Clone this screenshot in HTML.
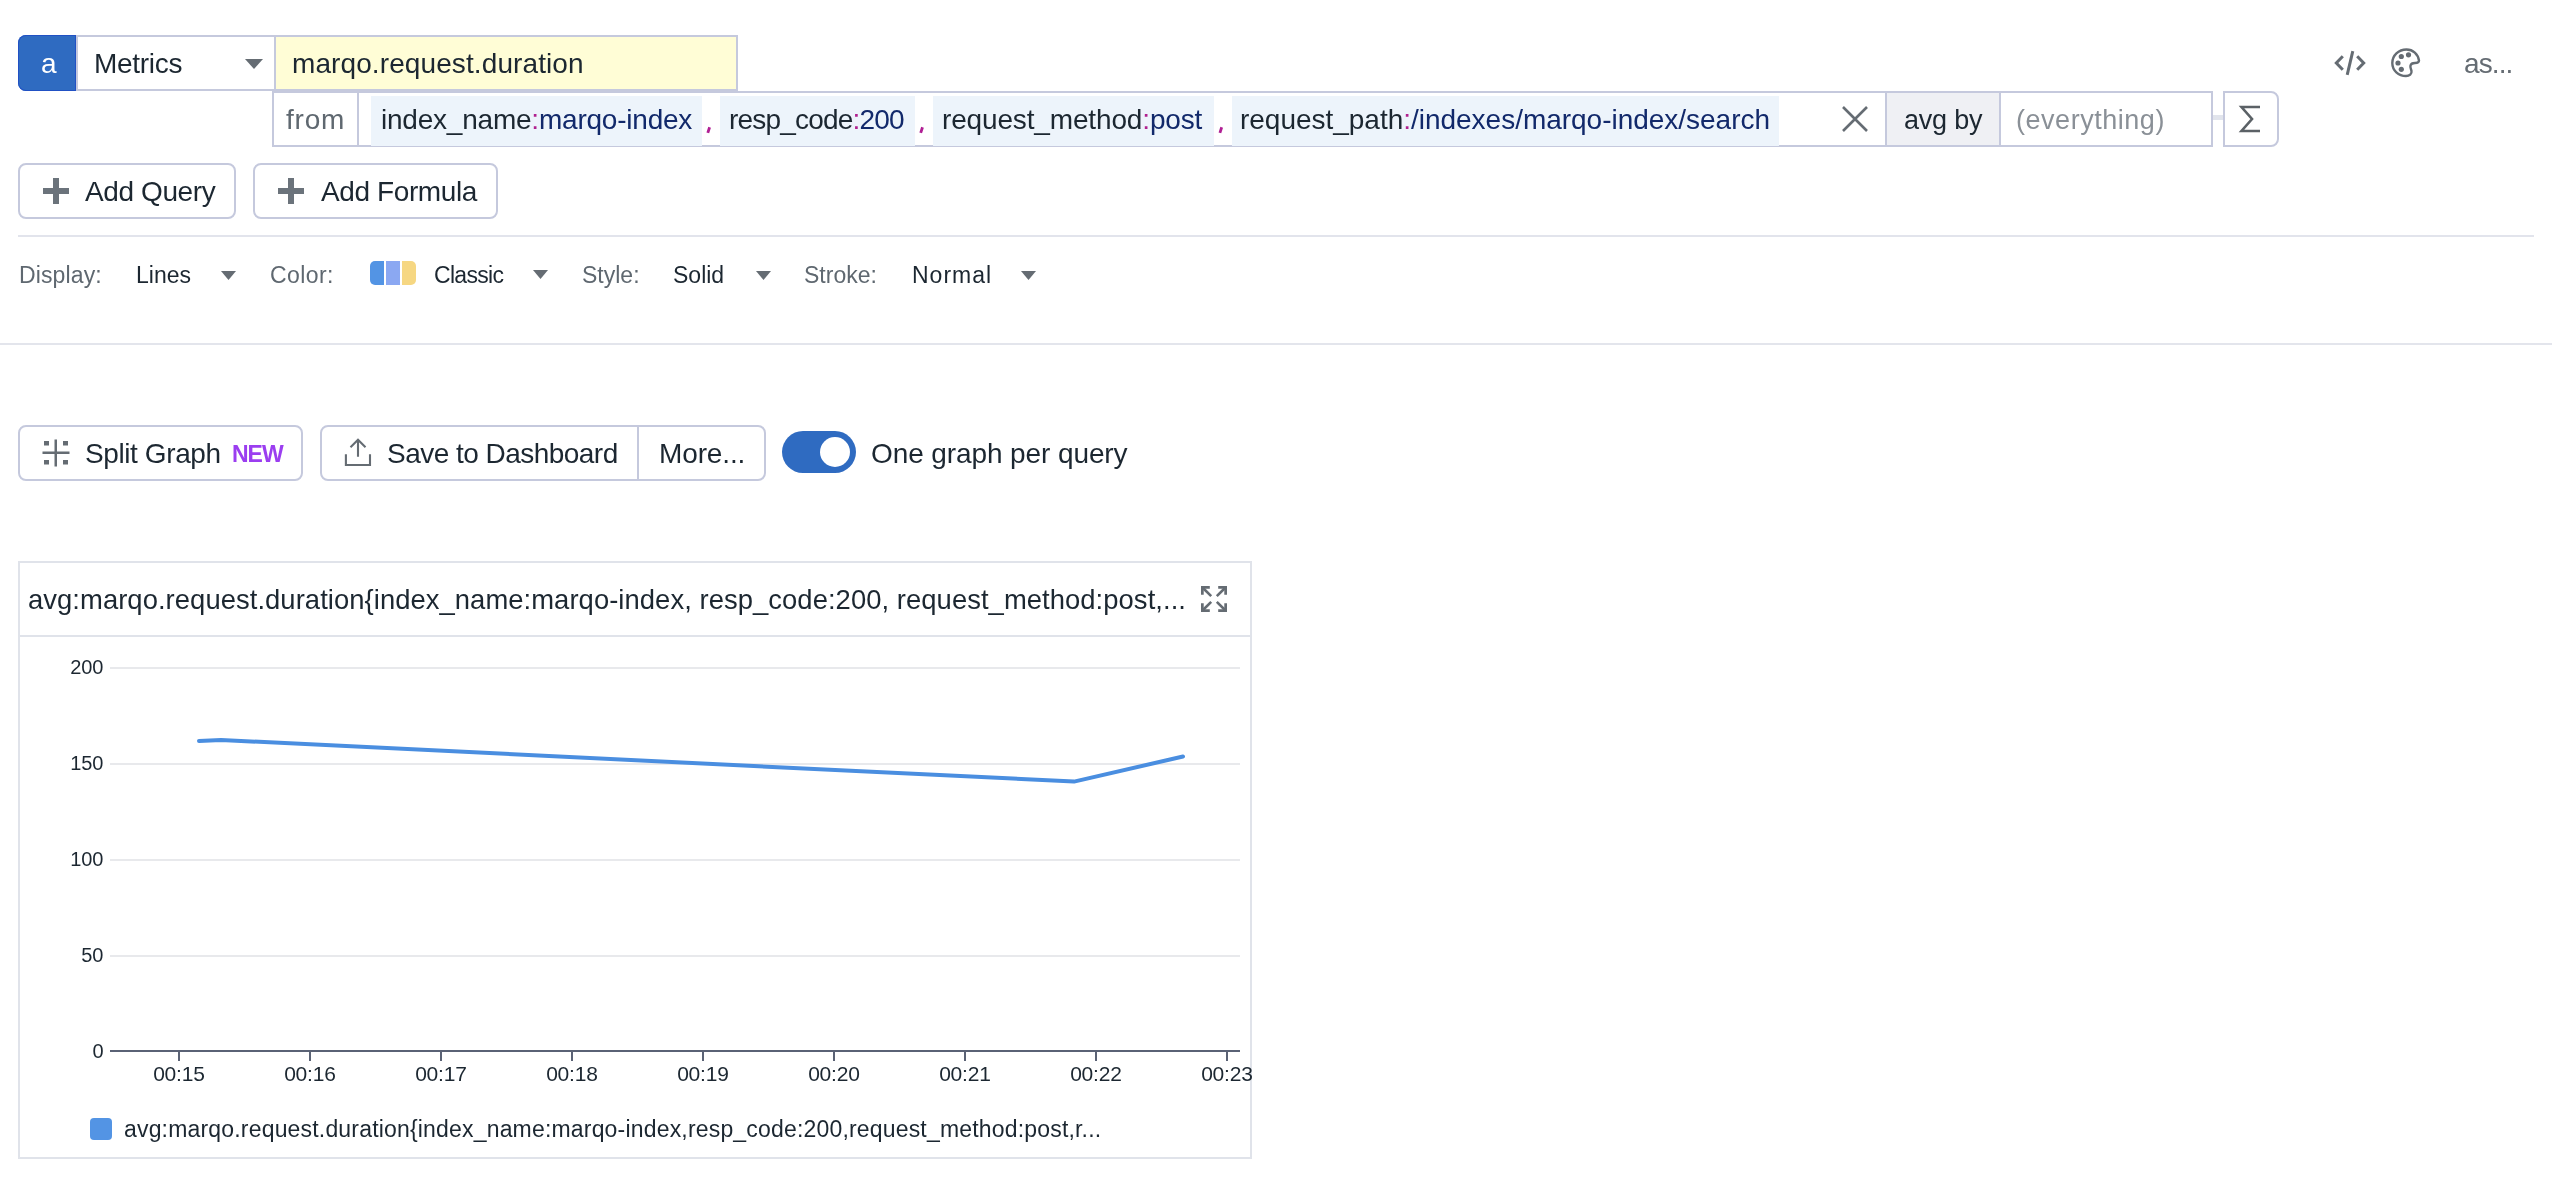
<!DOCTYPE html>
<html><head><meta charset='utf-8'><style>
html,body{margin:0;padding:0;background:#fff;width:2552px;height:1198px;overflow:hidden;}
body{position:relative;font-family:"Liberation Sans",sans-serif;}
.t{position:absolute;white-space:nowrap;will-change:transform;}
.r{position:absolute;}
svg.r{overflow:visible}
</style></head><body>
<div class='r' style='left:18px;top:35px;width:58px;height:56px;background:#2f6bc1;border-radius:8px 0 0 8px;box-shadow:inset 0 0 0 1px #2151c4'></div>
<div class='t' style='left:40.5px;top:50.3px;font-size:28px;line-height:28px;color:#ffffff'>a</div>
<div class='r' style='left:76px;top:35px;width:198px;height:56px;border:2px solid #c5c9dd;border-right:none;box-sizing:border-box;background:#fff'></div>
<div class='t' style='left:93.7px;top:50.3px;font-size:28px;line-height:28px;color:#1c2731;letter-spacing:-0.3px'>Metrics</div>
<svg class='r' style='left:245px;top:59px' width='18' height='10'><path d='M0 0H18L9 10Z' fill='#656c73'/></svg>
<div class='r' style='left:274px;top:35px;width:464px;height:56px;border:2px solid #c5c9dd;box-sizing:border-box;background:#fffdd6'></div>
<div class='t' style='left:291.8px;top:50.2px;font-size:28px;line-height:28px;color:#1c2731;letter-spacing:0.1px'>marqo.request.duration</div>
<div class='r' style='left:272px;top:91px;width:1941px;height:56px;border:2px solid #c5c9dd;box-sizing:border-box;background:#fff'></div>
<div class='r' style='left:357px;top:93px;width:2px;height:52px;background:#c5c9dd'></div>
<div class='t' style='left:286px;top:106.30000000000001px;font-size:28px;line-height:28px;color:#5f6870;letter-spacing:0.8px'>from</div>
<div class='r' style='left:371px;top:96px;width:331px;height:50px;background:#edf4fb'></div>
<div class='t' style='left:380.8px;top:106.30000000000001px;font-size:28px;line-height:28px;color:#1c2731;letter-spacing:-0.22px'>index_name<span style='color:#b0208f'>:</span><span style='color:#12296b'>marqo-index</span></div>
<svg class='r' style='left:0;top:0' width='1300' height='140'><path d='M709.6 127.3L707.8 132.9M922.5 127.3L920.7 132.9M1221.7 127.3L1219.9 132.9' stroke='#b01f94' stroke-width='2.8' fill='none'/></svg>
<div class='r' style='left:720px;top:96px;width:195px;height:50px;background:#edf4fb'></div>
<div class='t' style='left:728.9px;top:106.30000000000001px;font-size:28px;line-height:28px;color:#1c2731;letter-spacing:-0.8px'>resp_code<span style='color:#b0208f'>:</span><span style='color:#12296b'>200</span></div>
<div class='r' style='left:933px;top:96px;width:281px;height:50px;background:#edf4fb'></div>
<div class='t' style='left:942.3px;top:106.30000000000001px;font-size:28px;line-height:28px;color:#1c2731;letter-spacing:-0.15px'>request_method<span style='color:#b0208f'>:</span><span style='color:#12296b'>post</span></div>
<div class='r' style='left:1232px;top:96px;width:547px;height:50px;background:#edf4fb'></div>
<div class='t' style='left:1240px;top:106.30000000000001px;font-size:28px;line-height:28px;color:#1c2731;letter-spacing:-0.02px'>request_path<span style='color:#b0208f'>:</span><span style='color:#12296b'>/indexes/marqo-index/search</span></div>
<svg class='r' style='left:1840px;top:104px' width='30' height='30'><path d='M3 3L27 27M27 3L3 27' stroke='#656c73' stroke-width='2.6' fill='none'/></svg>
<div class='r' style='left:1885px;top:93px;width:2px;height:52px;background:#c5c9dd'></div>
<div class='r' style='left:1887px;top:93px;width:112px;height:52px;background:#eff0f4'></div>
<div class='r' style='left:1999px;top:93px;width:2px;height:52px;background:#c5c9dd'></div>
<div class='t' style='left:1903.6px;top:106.9px;font-size:27px;line-height:27px;color:#1c2731;letter-spacing:-0.2px'>avg by</div>
<div class='t' style='left:2015.6px;top:107px;font-size:27px;line-height:27px;color:#8a9097;letter-spacing:0.53px'>(everything)</div>
<div class='r' style='left:2213px;top:115px;width:10px;height:5px;background:#e1e4ec'></div>
<div class='r' style='left:2223px;top:91px;width:56px;height:56px;border:2px solid #c5c9dd;border-radius:0 8px 8px 0;box-sizing:border-box;background:#fff'></div>
<svg class='r' style='left:2236px;top:102px' width='30' height='34'><path d='M24 5H5.5L16 17L5.5 29H24' stroke='#5b6166' stroke-width='2.6' fill='none' stroke-linejoin='miter'/></svg>
<svg class='r' style='left:2330px;top:46px' width='40' height='34'><path d='M12.8 10.2L6.3 17L12.8 23.8M27.2 10.2L33.7 17L27.2 23.8' stroke='#656c73' stroke-width='3' fill='none'/><path d='M22.8 5.2L17.2 28.8' stroke='#656c73' stroke-width='3' fill='none'/></svg>
<svg class='r' style='left:2385px;top:42px' width='42' height='42'><path d='M21.5 7.5C13.5 7.5 7.3 13.5 7.3 21C7.3 28.5 13.5 34 21 34C24.5 34 27 32 26.5 29C26 26.5 25 25.5 25.5 23.5C26 21.5 28 21 30 21C32.5 21 34 20 34 18.5C33 12 28 7.5 21.5 7.5Z' stroke='#656c73' stroke-width='2.4' fill='none'/><circle cx='16.3' cy='14.5' r='2.6' fill='#656c73'/><circle cx='23.5' cy='12.8' r='2.6' fill='#656c73'/><circle cx='13' cy='21' r='2.6' fill='#656c73'/><circle cx='16.3' cy='27.3' r='2.6' fill='#656c73'/></svg>
<div class='t' style='left:2463.7px;top:49.7px;font-size:28px;line-height:28px;color:#656c73;letter-spacing:-0.9px'>as...</div>
<div class='r' style='left:18px;top:163px;width:218px;height:56px;border:2px solid #c5c9dd;border-radius:8px;box-sizing:border-box;background:#fff'></div>
<div class='r' style='left:43px;top:188.25px;width:26px;height:5.5px;background:#6b737b'></div>
<div class='r' style='left:53.25px;top:178px;width:5.5px;height:26px;background:#6b737b'></div>
<div class='t' style='left:85.2px;top:177.9px;font-size:28px;line-height:28px;color:#1c2731;letter-spacing:-0.4px'>Add Query</div>
<div class='r' style='left:253px;top:163px;width:245px;height:56px;border:2px solid #c5c9dd;border-radius:8px;box-sizing:border-box;background:#fff'></div>
<div class='r' style='left:278px;top:188.25px;width:26px;height:5.5px;background:#6b737b'></div>
<div class='r' style='left:288.25px;top:178px;width:5.5px;height:26px;background:#6b737b'></div>
<div class='t' style='left:320.5px;top:177.9px;font-size:28px;line-height:28px;color:#1c2731;letter-spacing:-0.4px'>Add Formula</div>
<div class='r' style='left:18px;top:235px;width:2516px;height:2px;background:#e2e4ec'></div>
<div class='t' style='left:19.2px;top:263.9px;font-size:23px;line-height:23px;color:#5f6870;letter-spacing:0.13px'>Display:</div>
<div class='t' style='left:136.2px;top:263.9px;font-size:23px;line-height:23px;color:#1c2731'>Lines</div>
<svg class='r' style='left:221px;top:270.5px' width='15' height='9'><path d='M0 0H15L7.5 9Z' fill='#656c73'/></svg>
<div class='t' style='left:270.2px;top:263.9px;font-size:23px;line-height:23px;color:#5f6870;letter-spacing:0.4px'>Color:</div>
<div class='r' style='left:370px;top:261px;width:46px;height:24px;border-radius:5px;overflow:hidden'><div class='r' style='left:0;top:0;width:14px;height:24px;background:#5394e4'></div><div class='r' style='left:16px;top:0;width:14px;height:24px;background:#8ba8f2'></div><div class='r' style='left:32px;top:0;width:14px;height:24px;background:#f6d782'></div></div>
<div class='t' style='left:433.6px;top:263.9px;font-size:23px;line-height:23px;color:#1c2731;letter-spacing:-0.68px'>Classic</div>
<svg class='r' style='left:533px;top:269.5px' width='15' height='9'><path d='M0 0H15L7.5 9Z' fill='#656c73'/></svg>
<div class='t' style='left:582px;top:263.9px;font-size:23px;line-height:23px;color:#5f6870'>Style:</div>
<div class='t' style='left:673.1px;top:263.9px;font-size:23px;line-height:23px;color:#1c2731'>Solid</div>
<svg class='r' style='left:756px;top:270.5px' width='15' height='9'><path d='M0 0H15L7.5 9Z' fill='#656c73'/></svg>
<div class='t' style='left:803.6px;top:263.9px;font-size:23px;line-height:23px;color:#5f6870'>Stroke:</div>
<div class='t' style='left:911.6px;top:263.9px;font-size:23px;line-height:23px;color:#1c2731;letter-spacing:1.0px'>Normal</div>
<svg class='r' style='left:1020.5px;top:270.5px' width='15' height='9'><path d='M0 0H15L7.5 9Z' fill='#656c73'/></svg>
<div class='r' style='left:0px;top:343px;width:2552px;height:2px;background:#e3e5ec'></div>
<div class='r' style='left:18px;top:425px;width:285px;height:56px;border:2px solid #c5c9dd;border-radius:8px;box-sizing:border-box;background:#fff'></div>
<svg class='r' style='left:42px;top:439px' width='28' height='28'><rect x='2' y='2' width='5' height='4.5' fill='#656c73'/><rect x='21' y='2' width='5' height='4.5' fill='#656c73'/><rect x='2' y='21' width='5' height='4.5' fill='#656c73'/><rect x='21' y='21' width='5' height='4.5' fill='#656c73'/><rect x='12.5' y='0.5' width='2.5' height='27' fill='#656c73'/><rect x='0.5' y='12.5' width='27' height='2.5' fill='#656c73'/></svg>
<div class='t' style='left:84.9px;top:440px;font-size:28px;line-height:28px;color:#1c2731;letter-spacing:-0.4px'>Split Graph</div>
<div class='t' style='left:231.7px;top:443px;font-size:23px;line-height:23px;color:#9b3ef0;font-weight:bold;letter-spacing:-1.0px'>NEW</div>
<div class='r' style='left:320px;top:425px;width:446px;height:56px;border:2px solid #c5c9dd;border-radius:8px;box-sizing:border-box;background:#fff'></div>
<div class='r' style='left:637px;top:427px;width:2px;height:52px;background:#c5c9dd'></div>
<svg class='r' style='left:338px;top:432px' width='40' height='40'><path d='M7.9 22.2V33H32V22.2' stroke='#656c73' stroke-width='2.1' fill='none'/><path d='M20 8V24.7M12.5 15.3L20 7.8L27.5 15.3' stroke='#656c73' stroke-width='2.1' fill='none'/></svg>
<div class='t' style='left:386.9px;top:439.8px;font-size:28px;line-height:28px;color:#1c2731;letter-spacing:-0.53px'>Save to Dashboard</div>
<div class='t' style='left:658.7px;top:439.8px;font-size:28px;line-height:28px;color:#1c2731;letter-spacing:-0.13px'>More...</div>
<div class='r' style='left:782px;top:431px;width:74px;height:42px;background:#2f6bc1;border-radius:21px'></div>
<div class='r' style='left:820px;top:437px;width:30px;height:30px;background:#fff;border-radius:50%'></div>
<div class='t' style='left:871px;top:439.8px;font-size:28px;line-height:28px;color:#1c2731;letter-spacing:-0.1px'>One graph per query</div>
<div class='r' style='left:18px;top:561px;width:1234px;height:598px;border:2px solid #e0e3ea;box-sizing:border-box;background:#fff'></div>
<div class='r' style='left:20px;top:635px;width:1230px;height:2px;background:#e0e3ea'></div>
<div class='t' style='left:27.8px;top:585.6px;font-size:27.4px;line-height:27.4px;color:#1c2731;letter-spacing:0.06px'>avg:marqo.request.duration{index_name:marqo-index, resp_code:200, request_method:post,...</div>
<svg class='r' style='left:1201px;top:586px' width='26' height='26'><g fill='#656c73'><path d='M0 0H8.8V2.7H2.7V8.8H0Z'/><path d='M26 0H17.2V2.7H23.3V8.8H26Z'/><path d='M0 26H8.8V23.3H2.7V17.2H0Z'/><path d='M26 26H17.2V23.3H23.3V17.2H26Z'/></g><g stroke='#656c73' stroke-width='2.6'><path d='M2 2L10.2 10.2M24 2L15.8 10.2M2 24L10.2 15.8M24 24L15.8 15.8'/></g></svg>
<div class='r' style='left:110px;top:667px;width:1130px;height:2px;background:#e8e9ec'></div>
<div class='t' style='left:0px;top:657px;font-size:20px;line-height:20px;color:#1c2731;width:103.5px;text-align:right'>200</div>
<div class='r' style='left:110px;top:763px;width:1130px;height:2px;background:#e8e9ec'></div>
<div class='t' style='left:0px;top:753px;font-size:20px;line-height:20px;color:#1c2731;width:103.5px;text-align:right'>150</div>
<div class='r' style='left:110px;top:859px;width:1130px;height:2px;background:#e8e9ec'></div>
<div class='t' style='left:0px;top:849px;font-size:20px;line-height:20px;color:#1c2731;width:103.5px;text-align:right'>100</div>
<div class='r' style='left:110px;top:955px;width:1130px;height:2px;background:#e8e9ec'></div>
<div class='t' style='left:0px;top:945px;font-size:20px;line-height:20px;color:#1c2731;width:103.5px;text-align:right'>50</div>
<div class='t' style='left:0px;top:1041px;font-size:20px;line-height:20px;color:#1c2731;width:103.5px;text-align:right'>0</div>
<div class='r' style='left:110px;top:1050px;width:1130px;height:2.2px;background:#5a6275'></div>
<div class='r' style='left:178.0px;top:1052px;width:2px;height:9px;background:#5a6275'></div>
<div class='t' style='left:139.0px;top:1063px;font-size:21px;line-height:21px;color:#1c2731;letter-spacing:-0.2px;width:80px;text-align:center;text-indent:-0.2px'>00:15</div>
<div class='r' style='left:309.05px;top:1052px;width:2px;height:9px;background:#5a6275'></div>
<div class='t' style='left:270.05px;top:1063px;font-size:21px;line-height:21px;color:#1c2731;letter-spacing:-0.2px;width:80px;text-align:center;text-indent:-0.2px'>00:16</div>
<div class='r' style='left:440.1px;top:1052px;width:2px;height:9px;background:#5a6275'></div>
<div class='t' style='left:401.1px;top:1063px;font-size:21px;line-height:21px;color:#1c2731;letter-spacing:-0.2px;width:80px;text-align:center;text-indent:-0.2px'>00:17</div>
<div class='r' style='left:571.1500000000001px;top:1052px;width:2px;height:9px;background:#5a6275'></div>
<div class='t' style='left:532.1500000000001px;top:1063px;font-size:21px;line-height:21px;color:#1c2731;letter-spacing:-0.2px;width:80px;text-align:center;text-indent:-0.2px'>00:18</div>
<div class='r' style='left:702.2px;top:1052px;width:2px;height:9px;background:#5a6275'></div>
<div class='t' style='left:663.2px;top:1063px;font-size:21px;line-height:21px;color:#1c2731;letter-spacing:-0.2px;width:80px;text-align:center;text-indent:-0.2px'>00:19</div>
<div class='r' style='left:833.25px;top:1052px;width:2px;height:9px;background:#5a6275'></div>
<div class='t' style='left:794.25px;top:1063px;font-size:21px;line-height:21px;color:#1c2731;letter-spacing:-0.2px;width:80px;text-align:center;text-indent:-0.2px'>00:20</div>
<div class='r' style='left:964.3000000000001px;top:1052px;width:2px;height:9px;background:#5a6275'></div>
<div class='t' style='left:925.3000000000001px;top:1063px;font-size:21px;line-height:21px;color:#1c2731;letter-spacing:-0.2px;width:80px;text-align:center;text-indent:-0.2px'>00:21</div>
<div class='r' style='left:1095.3500000000001px;top:1052px;width:2px;height:9px;background:#5a6275'></div>
<div class='t' style='left:1056.3500000000001px;top:1063px;font-size:21px;line-height:21px;color:#1c2731;letter-spacing:-0.2px;width:80px;text-align:center;text-indent:-0.2px'>00:22</div>
<div class='r' style='left:1226.4px;top:1052px;width:2px;height:9px;background:#5a6275'></div>
<div class='t' style='left:1187.4px;top:1063px;font-size:21px;line-height:21px;color:#1c2731;letter-spacing:-0.2px;width:80px;text-align:center;text-indent:-0.2px'>00:23</div>
<svg class='r' style='left:0;top:0' width='1252' height='1160'><polyline points='199,741 221,740 1074,781.6 1183,756.5' fill='none' stroke='#4a8ee0' stroke-width='4' stroke-linecap='round' stroke-linejoin='round'/></svg>
<div class='r' style='left:90px;top:1118px;width:22px;height:22px;background:#5394e4;border-radius:4px'></div>
<div class='t' style='left:123.6px;top:1118px;font-size:23px;line-height:23px;color:#1c2731;letter-spacing:0.18px'>avg:marqo.request.duration{index_name:marqo-index,resp_code:200,request_method:post,r...</div>
</body></html>
